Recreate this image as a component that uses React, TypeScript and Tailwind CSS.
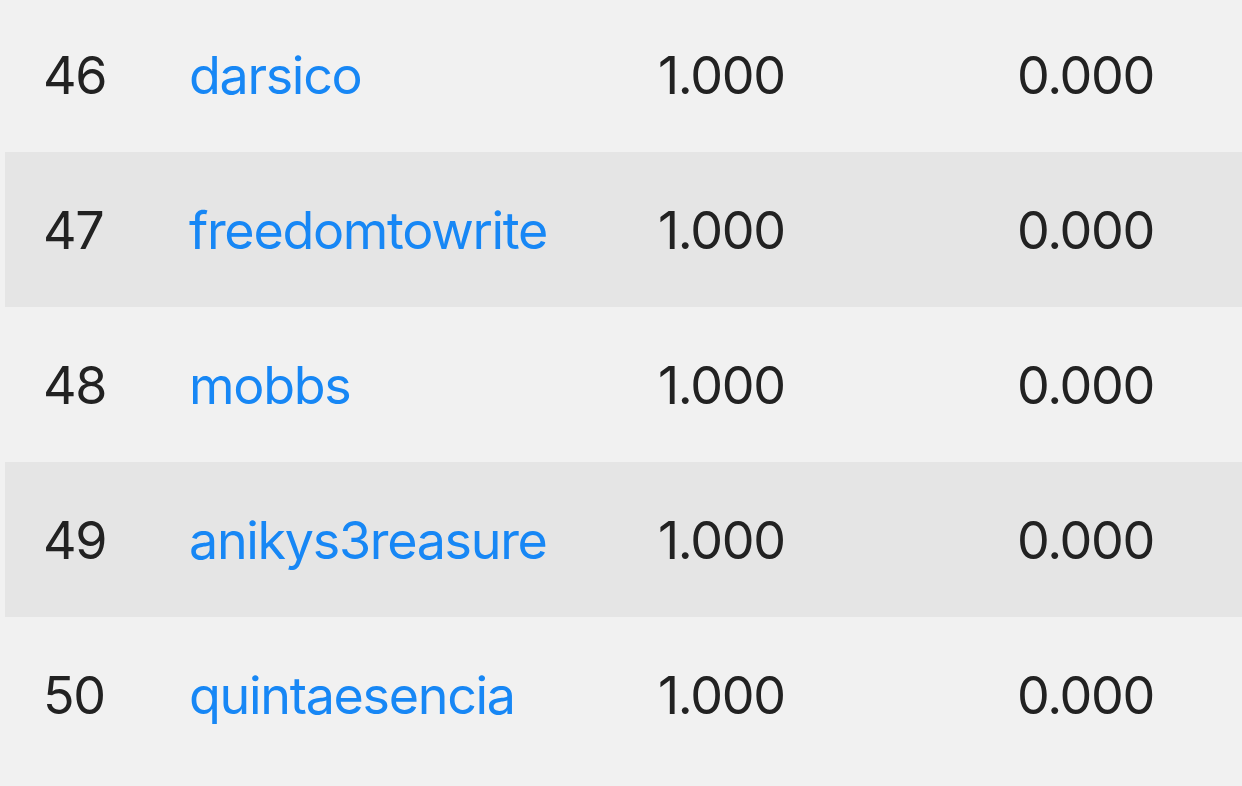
import React from 'react';

// ─── Data ──────────────────────────────────────────────────────────────────────

interface Row { rank: number; name: string; score: string; change: string; }

const rows: Row[] = [
  { rank: 46, name: 'darsico', score: '1.000', change: '0.000' },
  { rank: 47, name: 'freedomtowrite', score: '1.000', change: '0.000' },
  { rank: 48, name: 'mobbs', score: '1.000', change: '0.000' },
  { rank: 49, name: 'anikys3reasure', score: '1.000', change: '0.000' },
  { rank: 50, name: 'quintaesencia', score: '1.000', change: '0.000' },
];

// ─── App ───────────────────────────────────────────────────────────────────────

const App: React.FC = () => {
  return (
    <div
      className="w-[1242px] h-[786px] overflow-hidden bg-[#f1f1f1] text-[52px] leading-none tracking-[-1.3px] text-[#222222]"
      style={{ fontFamily: 'Inter, "Noto Sans", sans-serif' }}
    >
      <div className="mt-[-3px] ml-[5px]">
        {rows.map((r, i) => (
          <div
            key={r.rank}
            className={`grid h-[155px] grid-cols-[146px_469px_359px_1fr] items-center pl-[38px] pt-[3px] ${
              i % 2 === 1 ? 'bg-[#e5e5e5]' : ''
            }`}
          >
            <span>{r.rank}</span>
            <a className="text-[#1787f5]">{r.name}</a>
            <span>{r.score}</span>
            <span>{r.change}</span>
          </div>
        ))}
      </div>
    </div>
  );
};

export default App;
